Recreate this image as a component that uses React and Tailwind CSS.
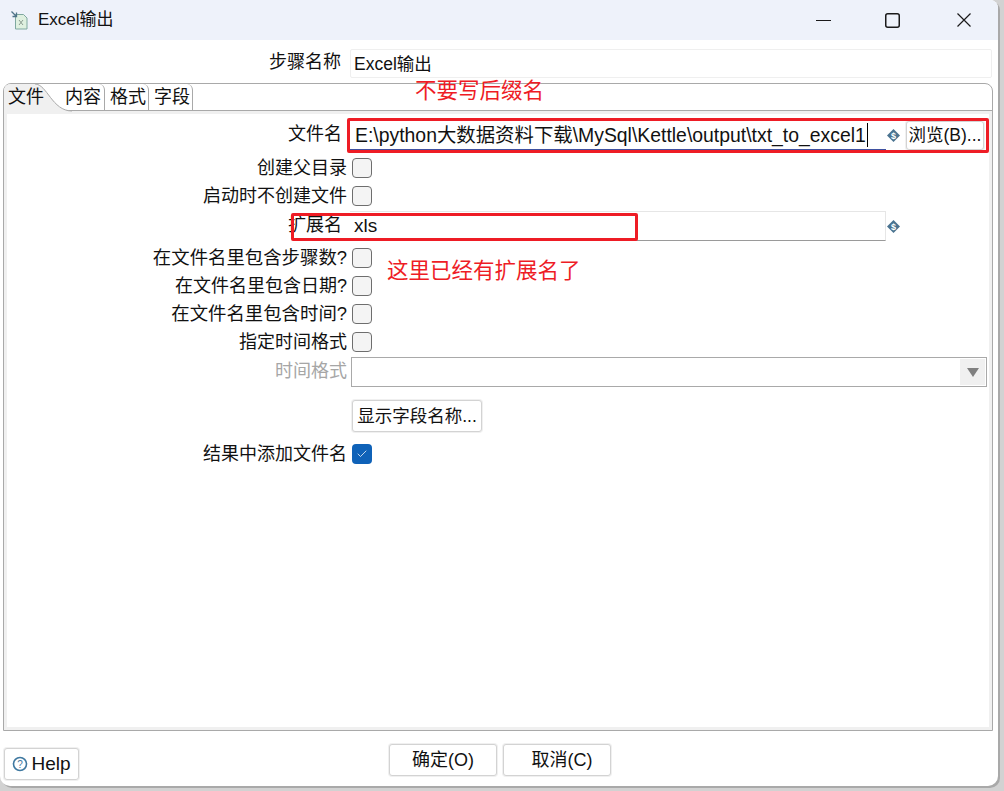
import React from 'react'
import { Check } from 'lucide-react'

const font = "font-['Liberation_Sans','Noto_Sans_CJK_SC',sans-serif]"

function VarIcon() {
  return (
    <svg width="13" height="13" viewBox="0 0 13 13" className="shrink-0">
      <path d="M6.5 0 L13 6.5 L6.5 13 L0 6.5 Z" fill="#4a7390" />
      <text x="6.5" y="9.5" textAnchor="middle" fontSize="9" fontWeight="700" fill="#fff" fontFamily="Liberation Sans">$</text>
    </svg>
  )
}

function Box({ checked }) {
  if (checked) {
    return (
      <span className="flex h-[20px] w-[20px] shrink-0 items-center justify-center rounded-[4px] bg-[#0f62b8]">
        <Check size={12} color="#fff" strokeWidth={1.5} />
      </span>
    )
  }
  return <span className="block h-[20px] w-[20px] shrink-0 rounded-[4px] border border-[#6e6e6e] bg-[#f4f4f4]" />
}

function CheckRow({ label, checked, mt, size = '' }) {
  return (
    <div className={`flex h-[20px] items-center ${mt}`}>
      <div className={`w-[340px] text-right whitespace-nowrap ${size}`}>{label}</div>
      <div className="ml-[5px]"><Box checked={checked} /></div>
    </div>
  )
}

function Btn({ children, className }) {
  return (
    <button className={`flex items-center justify-center rounded-[3px] border border-[#d3d3d3] bg-white shadow-[0_0_0_1px_#f0f0f0] ${className}`}>
      {children}
    </button>
  )
}

export default function App() {
  return (
    <div className={`relative h-[791px] w-[1004px] overflow-hidden bg-[#d2d2d2] text-[18px] leading-[22px] text-[#111] ${font}`}>
      <div className="h-[786px] w-[998px] overflow-hidden rounded-tr-[8px] rounded-b-[10px] bg-white shadow-[2px_2px_0_#a9a9a9]">
        {/* title bar */}
        <div className="flex h-[40px] items-center bg-[#eef2fa] pl-[11px]">
          <svg width="17" height="19" viewBox="0 0 17 19">
            <path d="M4.5 3.5h8l3.5 3.5v11H4.5z" fill="#dff0e0" stroke="#7fa8a0" />
            <path d="M0.5 0.5l5 5M5.5 1.5v4h-4" fill="none" stroke="#4f7488" strokeWidth="1.3" />
            <path d="M8 9l4 5M12 9l-4 5" stroke="#8a9a90" strokeWidth="1" />
          </svg>
          <span className="ml-[10px] text-[17px]">Excel输出</span>
          <div className="ml-auto flex items-center pr-[27px]">
            <svg width="15" height="15" viewBox="0 0 15 15" className="mr-[54px]"><path d="M0 7.5h15" stroke="#1a1a1a" strokeWidth="1" /></svg>
            <svg width="15" height="15" viewBox="0 0 15 15" className="mr-[57px]"><rect x="0.75" y="0.75" width="13.5" height="13.5" rx="2" fill="none" stroke="#1a1a1a" strokeWidth="1.5" /></svg>
            <svg width="14" height="14" viewBox="0 0 14 14"><path d="M0.5 0.5l13 13M13.5 0.5l-13 13" stroke="#1a1a1a" strokeWidth="1.2" /></svg>
          </div>
        </div>

        {/* step name */}
        <div className="mt-[9px] flex h-[29px] items-center pr-[6px]">
          <div className="w-[341px] pb-[3px] text-right">步骤名称</div>
          <div className="ml-[9px] flex h-full flex-1 items-center rounded-[2px] border border-[#efefef] pl-[3px] text-[17.5px]">Excel输出</div>
        </div>

        {/* tab folder */}
        <div className="ml-[3px] mt-[5px] h-[648px] w-[990px] rounded-t-[8px] border border-[#a9a9a9]">
          <div className="flex h-[27px] items-center border-b border-[#a9a9a9]">
            <div className="relative flex h-full w-[58px] items-center pl-[4px]">
              <svg width="68" height="28" viewBox="0 0 68 28" className="absolute left-0 top-0">
                <path d="M7 0H31C43 0 48 27 68 27V28H0V7Q0 0 7 0Z" fill="#f0f0f0" />
                <path d="M31 0C43 0 48 27 68 27" fill="none" stroke="#a9a9a9" />
              </svg>
              <span className="relative">文件</span>
            </div>
            <div className="relative flex h-full w-[43px] items-center rounded-tr-[6px] border-r border-[#a9a9a9] pl-[3px]">内容</div>
            <div className="relative flex h-full w-[44px] items-center rounded-tr-[6px] border-r border-[#a9a9a9] pl-[5px]">格式</div>
            <div className="relative flex h-full w-[44px] items-center rounded-tr-[6px] border-r border-[#a9a9a9] pl-[5px]">字段</div>
          </div>

          <div className="h-[619px] border-[3px] border-[#f0f0f0] pt-[6px]">
            {/* file name */}
            <div className="flex h-[30px] items-center">
              <div className="w-[335px] pb-[3px] text-right">文件名</div>
              <div className="ml-[8px] flex h-full w-[536px] items-center border-b border-[#3f51a0] pl-[5px] text-[19.4px]">
                <span className="whitespace-nowrap">E:\python大数据资料下载\MySql\Kettle\output\txt_to_excel1</span>
                <span className="ml-[1px] h-[24px] w-px shrink-0 bg-black" />
              </div>
              <div className="ml-[1px]"><VarIcon /></div>
              <Btn className="ml-[6px] h-[29px] w-[78px] whitespace-nowrap text-[17.5px]">浏览(B)...</Btn>
            </div>

            <CheckRow label="创建父目录" mt="mt-[8px]" />
            <CheckRow label="启动时不创建文件" mt="mt-[8px]" />

            {/* extension */}
            <div className="mt-[5px] flex h-[30px] items-center">
              <div className="w-[335px] pb-[3px] text-right">扩展名</div>
              <div className="ml-[8px] flex h-full w-[536px] items-center border-t border-r border-b border-[#e6e6e6] border-b-[#9a9a9a] pl-[4px] text-[19px]">xls</div>
              <div className="ml-[1px]"><VarIcon /></div>
            </div>

            <CheckRow label="在文件名里包含步骤数?" mt="mt-[7px]" size="text-[18.4px]" />
            <CheckRow label="在文件名里包含日期?" mt="mt-[8px]" />
            <CheckRow label="在文件名里包含时间?" mt="mt-[8px]" size="text-[18.4px]" />
            <CheckRow label="指定时间格式" mt="mt-[8px]" />

            {/* time format */}
            <div className="mt-[5px] flex h-[30px] items-center">
              <div className="w-[340px] pb-[3px] text-right text-[#a6a6a6]">时间格式</div>
              <div className="ml-[4px] flex h-full w-[636px] justify-end border border-[#a9a9a9] p-[1px]">
                <div className="flex w-[25px] items-center justify-center bg-[#f0f0f0]">
                  <svg width="12" height="9" viewBox="0 0 12 9"><path d="M0 0h12L6 9z" fill="#808080" /></svg>
                </div>
              </div>
            </div>

            <div className="ml-[345px] mt-[13px]">
              <Btn className="h-[32px] w-[130px] whitespace-nowrap text-[17.5px]">显示字段名称...</Btn>
            </div>

            <CheckRow label="结果中添加文件名" checked mt="mt-[12px]" />
          </div>
        </div>

        {/* bottom buttons */}
        <div className="relative mt-[13px] flex justify-center pl-[2px]">
          <div className="flex gap-[6px]">
            <Btn className="h-[32px] w-[108px]">确定(O)</Btn>
            <Btn className="h-[32px] w-[108px] pl-[10px]">取消(C)</Btn>
          </div>
          <Btn className="absolute left-[4px] top-[4px] h-[32px] w-[75px] gap-[3px] text-[19px]">
            <svg width="16" height="16" viewBox="0 0 16 16">
              <circle cx="8" cy="8" r="6.5" fill="none" stroke="#3f78a0" strokeWidth="1.6" />
              <text x="8" y="11.5" textAnchor="middle" fontSize="10" fill="#3f78a0" fontFamily="Liberation Sans">?</text>
            </svg>
            Help
          </Btn>
        </div>
      </div>

      {/* red annotations drawn over the dialog */}
      <div className="absolute left-[347px] top-[118px] h-[35px] w-[642px] rounded-[2px] border-[3px] border-[#ee1c25]" />
      <div className="absolute left-[291px] top-[213px] h-[28px] w-[347px] rounded-[2px] border-[3px] border-[#ee1c25]" />
      <div className="absolute left-[415px] top-[78px] whitespace-nowrap text-[21.5px] leading-[26px] text-[#ee1c25]">不要写后缀名</div>
      <div className="absolute left-[387px] top-[258px] whitespace-nowrap text-[21.5px] leading-[26px] text-[#ee1c25]">这里已经有扩展名了</div>
    </div>
  )
}
